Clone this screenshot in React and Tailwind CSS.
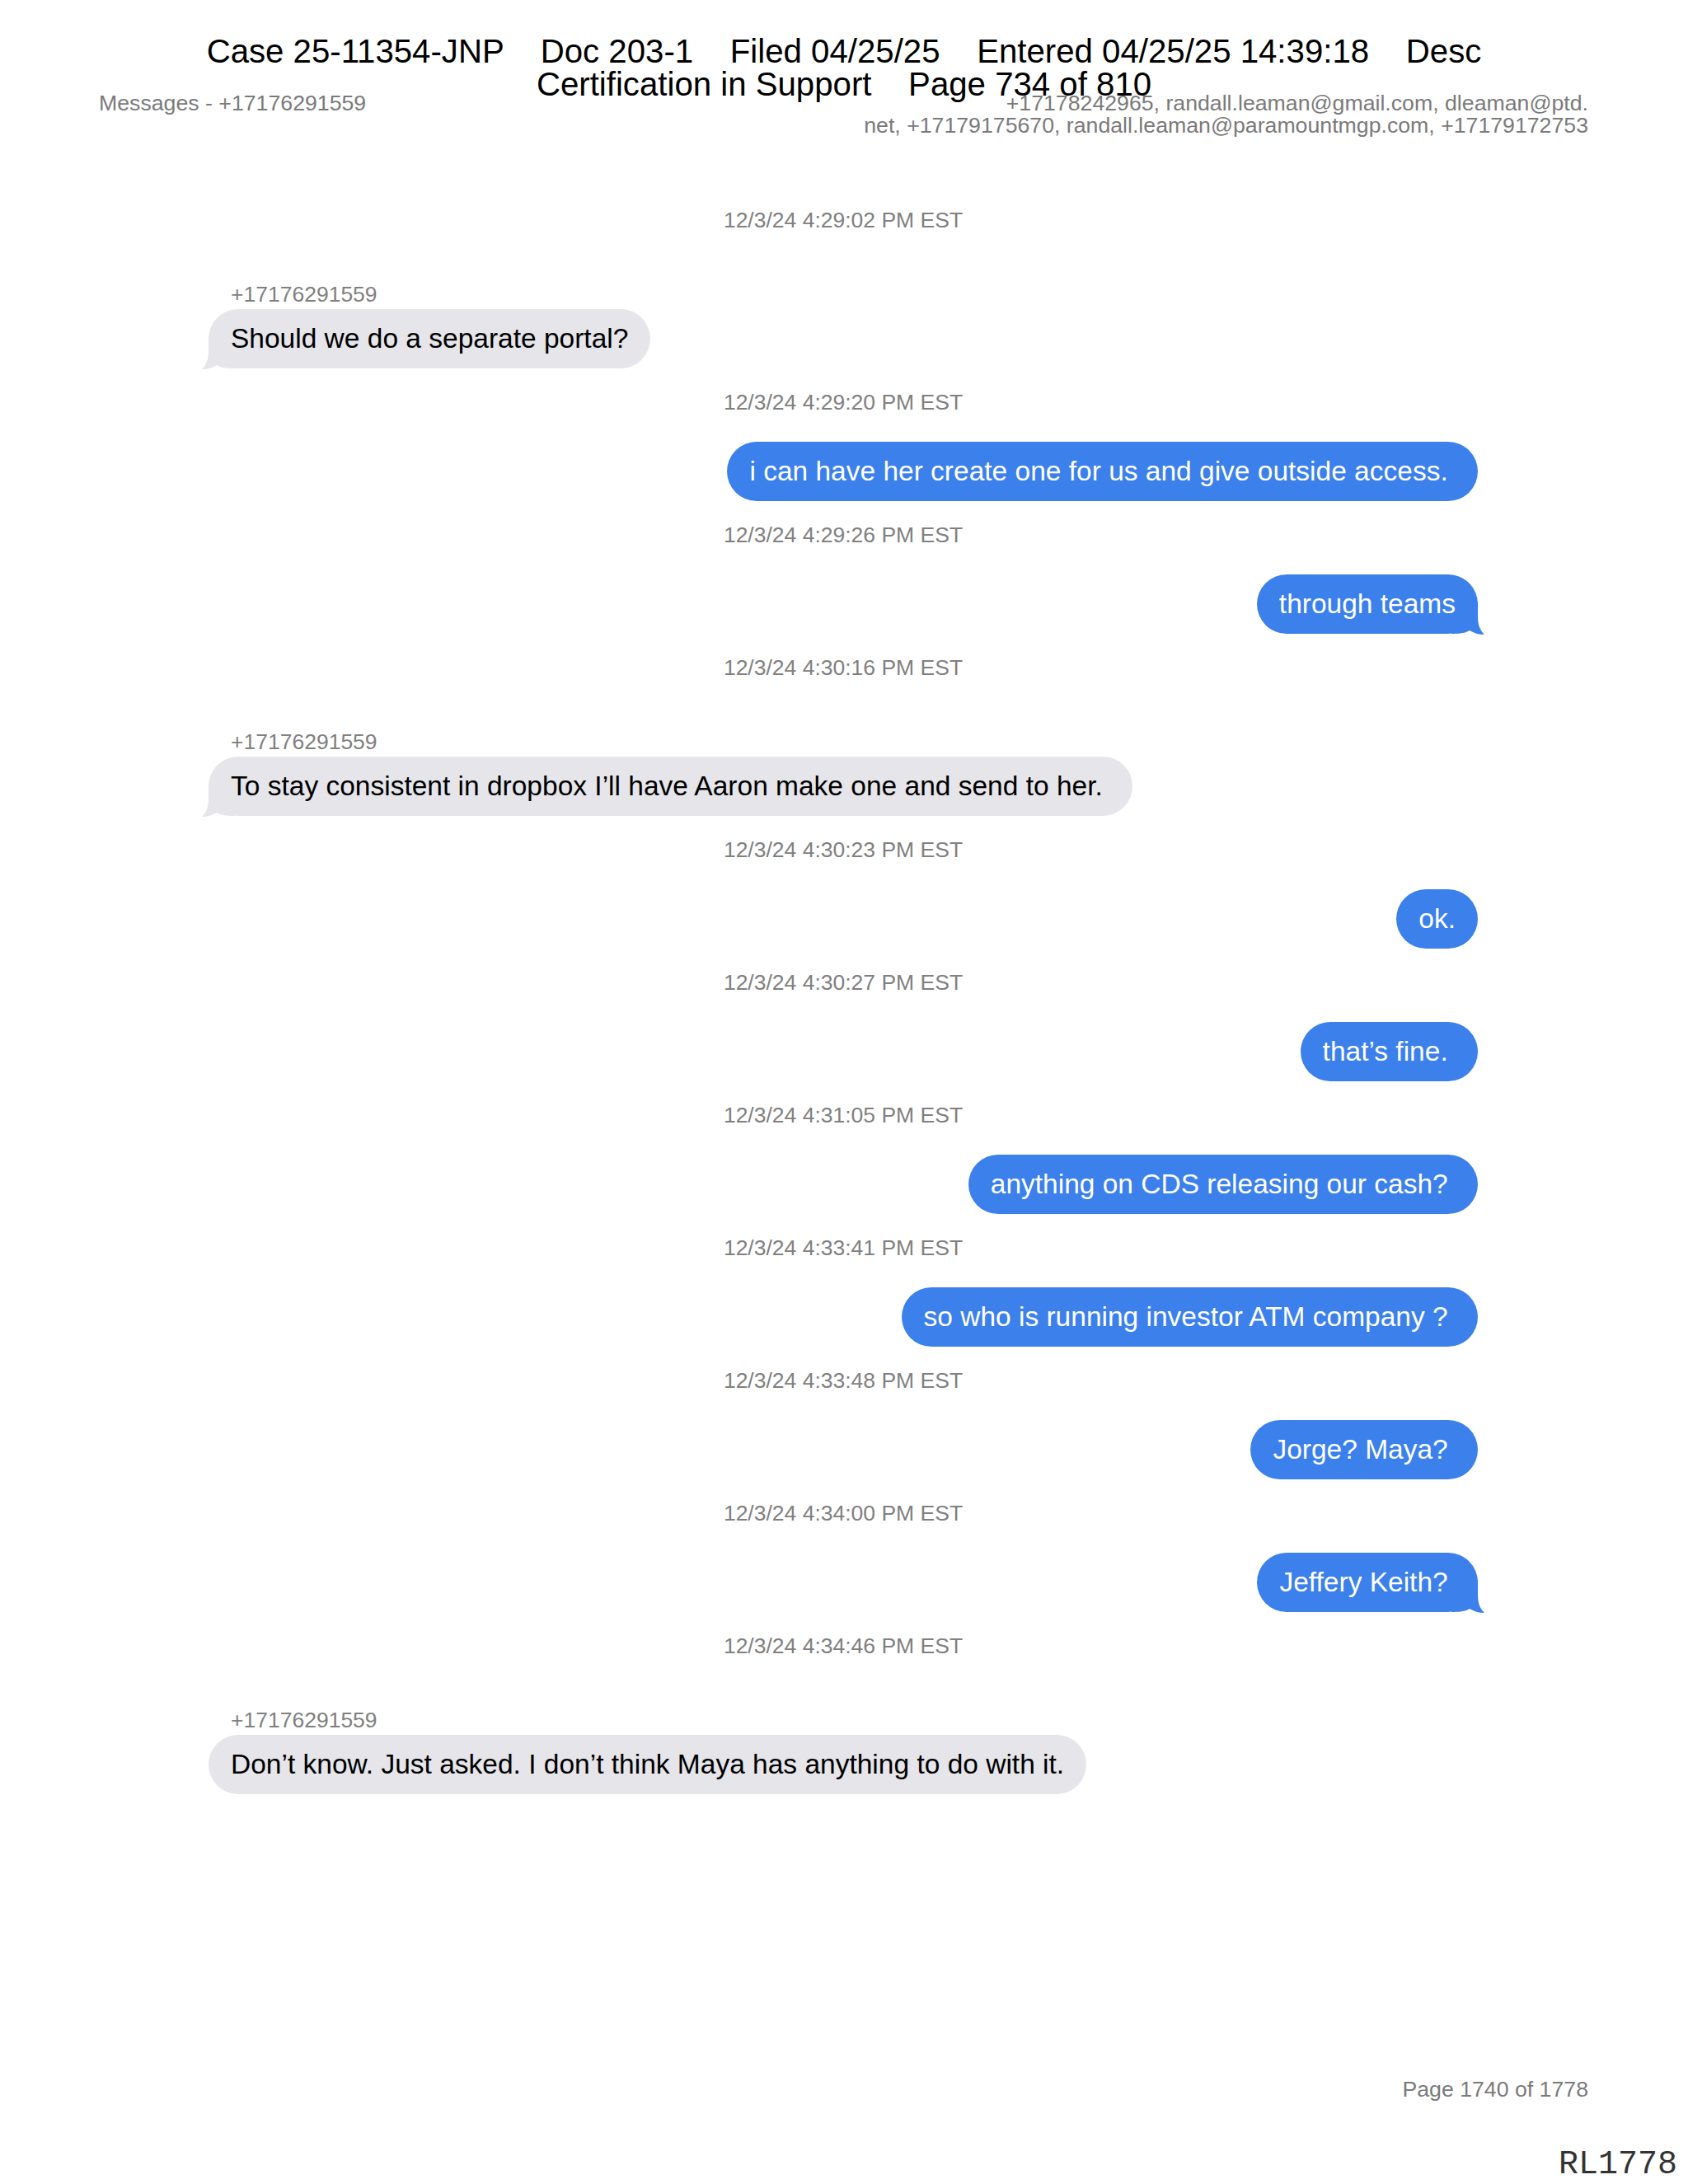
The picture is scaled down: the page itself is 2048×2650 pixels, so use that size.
import React from "react";

// trailing spaces are kept on purpose: the export pads some bubbles with them
const messages = [
  { ts: "12/3/24 4:29:02 PM EST", side: "left", sender: "+17176291559", text: "Should we do a separate portal?", tail: true },
  { ts: "12/3/24 4:29:20 PM EST", side: "right", text: "i can have her create one for us and give outside access. " },
  { ts: "12/3/24 4:29:26 PM EST", side: "right", text: "through teams", tail: true },
  { ts: "12/3/24 4:30:16 PM EST", side: "left", sender: "+17176291559", text: "To stay consistent in dropbox I\u2019ll have Aaron make one and send to her. ", tail: true },
  { ts: "12/3/24 4:30:23 PM EST", side: "right", text: "ok." },
  { ts: "12/3/24 4:30:27 PM EST", side: "right", text: "that\u2019s fine. " },
  { ts: "12/3/24 4:31:05 PM EST", side: "right", text: "anything on CDS releasing our cash? " },
  { ts: "12/3/24 4:33:41 PM EST", side: "right", text: "so who is running investor ATM company ? " },
  { ts: "12/3/24 4:33:48 PM EST", side: "right", text: "Jorge? Maya? " },
  { ts: "12/3/24 4:34:00 PM EST", side: "right", text: "Jeffery Keith? ", tail: true },
  { ts: "12/3/24 4:34:46 PM EST", side: "left", sender: "+17176291559", text: "Don\u2019t know. Just asked. I don\u2019t think Maya has anything to do with it." },
];

const LeftTail = () => (
  <svg className="absolute -left-[8px] -bottom-[1px]" width="40" height="40" viewBox="0 0 40 40">
    <path d="M8 0 L8 18 C8 29 5 35 0 40 C7 40 13 38 18 35 C23 38 29 39 40 39 L40 0 Z" fill="#e5e5ea" />
  </svg>
);

const RightTail = () => (
  <svg className="absolute -right-[8px] -bottom-[1px]" width="40" height="40" viewBox="0 0 40 40">
    <path d="M32 0 L32 18 C32 29 35 35 40 40 C33 40 27 38 22 35 C17 38 11 39 0 39 L0 0 Z" fill="#3b80eb" />
  </svg>
);

const Bubble = ({ m }) => {
  if (m.side === "left") {
    return (
      <div className="flex flex-col items-start">
        <div className="mt-[60px] pl-[27px] text-[26.5px] leading-[30px] text-[#808080]">{m.sender}</div>
        <div className="relative mt-[3px] whitespace-pre rounded-[36px] bg-[#e5e5ea] px-[27px] py-[18px] text-[33.5px] leading-[36px] text-black">
          {m.tail && <LeftTail />}
          <span className="relative">{m.text}</span>
        </div>
      </div>
    );
  }
  return (
    <div className="flex justify-end">
      <div className="relative mt-[33px] whitespace-pre rounded-[36px] bg-[#3b80eb] px-[27px] py-[18px] text-[33.5px] leading-[36px] text-white">
        {m.tail && <RightTail />}
        <span className="relative">{m.text}</span>
      </div>
    </div>
  );
};

export default function App() {
  return (
    <div className="relative h-[2650px] w-[2048px] bg-white font-['Liberation_Sans',Arial,sans-serif]">
      {/* court filing stamp laid over the export */}
      <div className="absolute left-0 right-0 top-[43px] z-10 whitespace-pre text-center text-[40.2px] leading-[40px] text-black">
        <div>{"Case 25-11354-JNP    Doc 203-1    Filed 04/25/25    Entered 04/25/25 14:39:18    Desc"}</div>
        <div>{"Certification in Support    Page 734 of 810"}</div>
      </div>

      <div className="flex items-start justify-between pl-[120px] pr-[121px] pt-[112px] text-[26.7px] leading-[27px] text-[#7a7a7a]">
        <div>Messages - +17176291559</div>
        <div className="text-right">
          <div>+17178242965, randall.leaman@gmail.com, dleaman@ptd.</div>
          <div>net, +17179175670, randall.leaman@paramountmgp.com, +17179172753</div>
        </div>
      </div>

      <div className="flex flex-col pl-[253px] pr-[255px] pt-[86px]">
        {messages.map((m, i) => (
          <div key={i} className="flex flex-col">
            <div className={`${i === 0 ? "" : "mt-[26px]"} text-center text-[26.5px] leading-[30px] text-[#808080]`}>{m.ts}</div>
            <Bubble m={m} />
          </div>
        ))}
      </div>

      <div className="absolute bottom-[100px] right-[121px] text-[26.7px] leading-[30px] text-[#7a7a7a]">Page 1740 of 1778</div>
      <div className="absolute bottom-[3px] right-[13px] font-['Liberation_Mono',monospace] text-[40px] leading-[40px] text-[#333]">RL1778</div>
    </div>
  );
}
